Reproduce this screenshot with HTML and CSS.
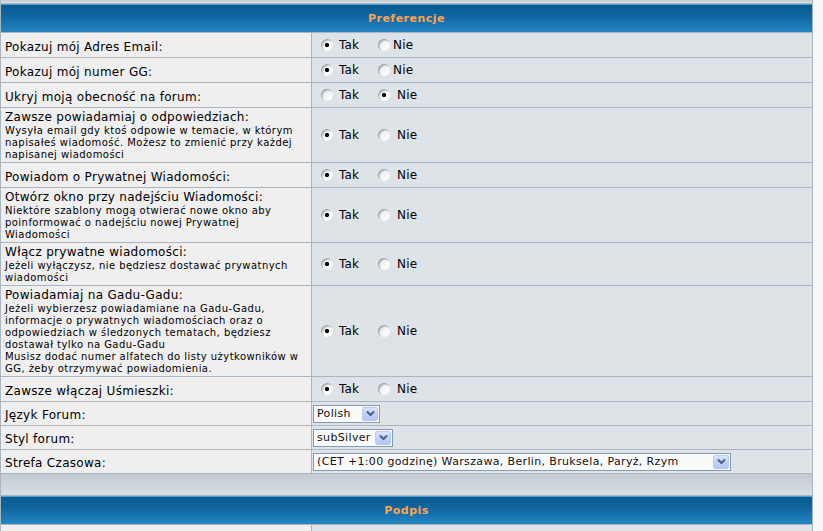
FILE: index.html
```html
<!DOCTYPE html>
<html lang="pl">
<head>
<meta charset="utf-8">
<title>Preferencje</title>
<link rel="stylesheet" href="styles.css">
</head>
<body>
<table class="forumline">
  <colgroup><col class="c1"><col class="c2"></colgroup>
  <tr class="strip"><td colspan="2" class="catBottom"></td></tr>
  <tr class="head"><th colspan="2" class="thHead">Preferencje</th></tr>

  <tr class="r24">
    <td class="row1"><span class="gen">Pokazuj mój Adres Email:</span></td>
    <td class="row2"><div class="choice"><label class="opt first"><input class="rb" type="radio" name="email" checked><span class="t6">Tak</span></label><label class="opt"><input class="rb" type="radio" name="email"><span class="t3">Nie</span></label></div></td>
  </tr>
  <tr class="r24">
    <td class="row1"><span class="gen">Pokazuj mój numer GG:</span></td>
    <td class="row2"><div class="choice"><label class="opt first"><input class="rb" type="radio" name="gg" checked><span class="t6">Tak</span></label><label class="opt"><input class="rb" type="radio" name="gg"><span class="t3">Nie</span></label></div></td>
  </tr>
  <tr class="r24">
    <td class="row1"><span class="gen">Ukryj moją obecność na forum:</span></td>
    <td class="row2"><div class="choice"><label class="opt first"><input class="rb" type="radio" name="hide"><span class="t6">Tak</span></label><label class="opt"><input class="rb" type="radio" name="hide" checked><span class="t7">Nie</span></label></div></td>
  </tr>
  <tr>
    <td class="row1 multi"><span class="gen">Zawsze powiadamiaj o odpowiedziach:</span><span class="gensmall">Wysyła email gdy ktoś odpowie w temacie, w którym<br>napisałeś wiadomość. Możesz to zmienić przy każdej<br>napisanej wiadomości</span></td>
    <td class="row2"><div class="choice"><label class="opt first"><input class="rb" type="radio" name="notify" checked><span class="t6">Tak</span></label><label class="opt"><input class="rb" type="radio" name="notify"><span class="t7">Nie</span></label></div></td>
  </tr>
  <tr class="r24">
    <td class="row1"><span class="gen">Powiadom o Prywatnej Wiadomości:</span></td>
    <td class="row2"><div class="choice"><label class="opt first"><input class="rb" type="radio" name="pm" checked><span class="t6">Tak</span></label><label class="opt"><input class="rb" type="radio" name="pm"><span class="t7">Nie</span></label></div></td>
  </tr>
  <tr>
    <td class="row1 multi"><span class="gen">Otwórz okno przy nadejściu Wiadomości:</span><span class="gensmall">Niektóre szablony mogą otwierać nowe okno aby<br>poinformować o nadejściu nowej Prywatnej<br>Wiadomości</span></td>
    <td class="row2"><div class="choice"><label class="opt first"><input class="rb" type="radio" name="popup" checked><span class="t6">Tak</span></label><label class="opt"><input class="rb" type="radio" name="popup"><span class="t7">Nie</span></label></div></td>
  </tr>
  <tr>
    <td class="row1 multi"><span class="gen">Włącz prywatne wiadomości:</span><span class="gensmall">Jeżeli wyłączysz, nie będziesz dostawać prywatnych<br>wiadomości</span></td>
    <td class="row2"><div class="choice"><label class="opt first"><input class="rb" type="radio" name="allowpm" checked><span class="t6">Tak</span></label><label class="opt"><input class="rb" type="radio" name="allowpm"><span class="t7">Nie</span></label></div></td>
  </tr>
  <tr>
    <td class="row1 multi"><span class="gen">Powiadamiaj na Gadu-Gadu:</span><span class="gensmall">Jeżeli wybierzesz powiadamiane na Gadu-Gadu,<br>informacje o prywatnych wiadomościach oraz o<br>odpowiedziach w śledzonych tematach, będziesz<br>dostawał tylko na Gadu-Gadu<br>Musisz dodać numer alfatech do listy użytkowników w<br>GG, żeby otrzymywać powiadomienia.</span></td>
    <td class="row2"><div class="choice"><label class="opt first"><input class="rb" type="radio" name="ggnotify" checked><span class="t6">Tak</span></label><label class="opt"><input class="rb" type="radio" name="ggnotify"><span class="t7">Nie</span></label></div></td>
  </tr>
  <tr class="r24">
    <td class="row1"><span class="gen">Zawsze włączaj Uśmieszki:</span></td>
    <td class="row2"><div class="choice"><label class="opt first"><input class="rb" type="radio" name="smile" checked><span class="t6">Tak</span></label><label class="opt"><input class="rb" type="radio" name="smile"><span class="t7">Nie</span></label></div></td>
  </tr>
  <tr class="r23">
    <td class="row1"><span class="gen">Język Forum:</span></td>
    <td class="row2 selcell"><span class="select sel-lang"><span class="val">Polish</span><span class="arrow"><svg width="9" height="7" viewBox="0 0 9 7"><path d="M1 1.5 L4.5 5 L8 1.5" fill="none" stroke="#4d6185" stroke-width="2"/></svg></span></span></td>
  </tr>
  <tr class="r23">
    <td class="row1"><span class="gen">Styl forum:</span></td>
    <td class="row2 selcell"><span class="select sel-style"><span class="val">subSilver</span><span class="arrow"><svg width="9" height="7" viewBox="0 0 9 7"><path d="M1 1.5 L4.5 5 L8 1.5" fill="none" stroke="#4d6185" stroke-width="2"/></svg></span></span></td>
  </tr>
  <tr class="r23">
    <td class="row1"><span class="gen">Strefa Czasowa:</span></td>
    <td class="row2 selcell"><span class="select sel-tz"><span class="val">(CET +1:00 godzinę) Warszawa, Berlin, Bruksela, Paryż, Rzym</span><span class="arrow"><svg width="9" height="7" viewBox="0 0 9 7"><path d="M1 1.5 L4.5 5 L8 1.5" fill="none" stroke="#4d6185" stroke-width="2"/></svg></span></span></td>
  </tr>
  <tr class="catrow"><td colspan="2" class="catBottom"></td></tr>
  <tr class="head"><th colspan="2" class="thHead">Podpis</th></tr>
  <tr class="r24">
    <td class="row1"></td>
    <td class="row2"></td>
  </tr>
</table>
</body>
</html>
```

FILE: styles.css
```css
html, body {
  margin: 0;
  padding: 0;
  overflow: hidden;
  background: #f6f7f8;
}

body {
  font-family: "DejaVu Sans", Verdana, sans-serif;
  color: #000;
}

.forumline {
  width: 813px;
  table-layout: fixed;
  border-collapse: separate;
  border-spacing: 1px;
  background: #a9b5bf;
  margin-top: -1px;
}

col.c1 { width: 310px; }
col.c2 { width: 500px; }

td, th { padding: 0; }

.strip { height: 3px; }
.catrow { height: 21px; }
.head { height: 28px; }
.r24 { height: 24px; }
.r23 { height: 23px; }

.catBottom {
  background: linear-gradient(to bottom, #c3cbd2 0%, #cdd4da 50%, #d9dfe4 100%);
}

.thHead {
  background: linear-gradient(to bottom, #4c9ed2 0, #4c9ed2 1px, #0a5a8d 1px, #0f66a0 45%, #2487c4 100%);
  color: #ffa34f;
  font-size: 11px;
  font-weight: bold;
  letter-spacing: 0.5px;
  text-align: center;
  vertical-align: middle;
}

.row1 {
  background: #efefef;
  padding: 0 4px;
  vertical-align: middle;
}

.row2 {
  background: #dee3e7;
  padding: 0 4px;
  vertical-align: middle;
}

.multi {
  padding: 2px 4px 1px 4px;
}

.gen {
  font-size: 12px;
  line-height: 15px;
  letter-spacing: 0.3px;
}

.multi .gen { display: block; }

.gensmall {
  display: block;
  font-size: 10px;
  line-height: 12px;
  letter-spacing: 0.45px;
  white-space: nowrap;
}

.choice {
  display: flex;
  align-items: center;
  padding-left: 5px;
  font-size: 12px;
  letter-spacing: 0.2px;
}

.opt {
  display: flex;
  align-items: center;
}

.opt.first { width: 57px; }

.t6 { margin-left: 6px; }
.t3 { margin-left: 3px; }
.t7 { margin-left: 7px; }

.rb {
  -webkit-appearance: none;
  appearance: none;
  margin: 0;
  width: 12px;
  height: 12px;
  border-radius: 50%;
  background: linear-gradient(135deg, #dadada 0%, #f4f4f4 45%, #ffffff 100%);
  box-shadow: inset 1px 1px 0 #a4a4a4, inset 2px 2px 0 #d2d2d2;
}

.rb:checked {
  background:
    radial-gradient(circle at 50% 50%, #000 0, #000 1.8px, transparent 2.4px),
    linear-gradient(135deg, #dadada 0%, #f4f4f4 45%, #ffffff 100%);
}

.selcell { padding-left: 1px; }

.select {
  display: flex;
  align-items: center;
  justify-content: space-between;
  box-sizing: border-box;
  height: 18px;
  border: 1px solid #7f9db9;
  background: #fafafa;
  font-size: 11px;
  color: #111;
}

.sel-lang { width: 67px; }
.sel-style { width: 80px; }
.sel-tz { width: 418px; }

.val {
  padding-left: 3px;
  white-space: nowrap;
  line-height: 14px;
  letter-spacing: 0.35px;
}

.arrow {
  display: flex;
  align-items: center;
  justify-content: center;
  box-sizing: border-box;
  width: 16px;
  height: 14px;
  margin-right: 1px;
  border: 1px solid #bccbf0;
  border-radius: 2px;
  background: linear-gradient(to bottom, #d9e4fd 0%, #c0d1fa 50%, #b2c6f3 100%);
}
```
